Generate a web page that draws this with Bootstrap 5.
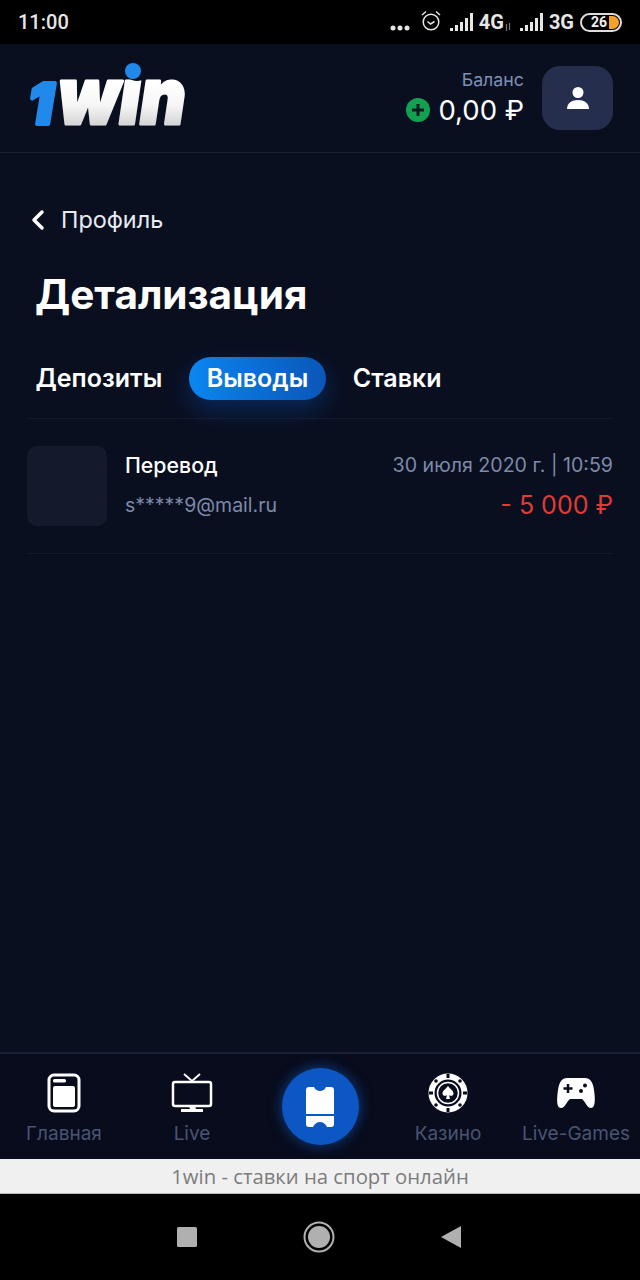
<!DOCTYPE html>
<html lang="ru">
<head>
  <meta charset="utf-8" />
  <title>1win - Детализация</title>
  <link href="https://cdn.jsdelivr.net/npm/bootstrap@5.3.2/dist/css/bootstrap.min.css" rel="stylesheet">
  <style>
    html, body { height: 1280px; overflow: hidden; }
    body { background: #0a0f20; color: #fff; font-family: Inter, "Noto Sans", sans-serif; }
    .screen { width: 640px; height: 1280px; }

    .status-bar { height: 44px; background: #000; padding: 0 18px; font-family: Roboto, sans-serif; color: #e6e6e6; }
    .status-time { font-size: 20px; font-weight: 500; }
    .status-icons { gap: 4px; }
    .status-net { font-size: 20px; font-weight: 700; line-height: 24px; }
    .dots-icon { margin: 11px 7px 0 0; }
    .alarm-icon { margin-right: 5px; margin-top: -4px; }
    .lte-icon { margin-right: 5px; margin-top: 9px; margin-left: -3px; }
    .battery { width: 42px; height: 19px; margin-left: 2px; border: 2px solid #ddd; border-radius: 10px; font-size: 14px; font-weight: 700; line-height: 15px; padding-left: 9px; color: #eee; }
    .battery-fill { width: 10px; height: 13px; top: 1px; right: 1px; border-radius: 0 7px 7px 0; background: #f2a32c; }

    .app-header { height: 109px; padding: 0 27px 0 25px; border-bottom: 1px solid #1a2035; }
    .logo { width: 166px; height: 100px; overflow: visible; }
    .logo-one { font: italic 900 56px/1 Inter, sans-serif; fill: #2189ea; stroke: #2189ea; stroke-width: 4; stroke-linejoin: round; }
    .logo-win { font: italic 900 78px/1 Inter, sans-serif; fill: url(#winGrad); stroke: url(#winGrad); stroke-width: 3; stroke-linejoin: round; }
    .balance-box { margin-right: 18px; }
    .balance-label { font-size: 17.800px; line-height: 22px; color: #7d8fb5; }
    .balance-value { font-size: 27.500px; line-height: 36px; padding-top: 1px; }
    .add-btn { width: 24px; height: 24px; border-radius: 50%; background: #12a150; }
    .user-btn { width: 71px; height: 64px; border-radius: 18px; background: #252e4d; border: 0; }

    .back-link { margin-top: 52px; padding-left: 31px; font-size: 23.400px; line-height: 30px; color: #e8ebf2; }
    .page-title { margin: 32px 0 0 35px; font-size: 40.500px; line-height: 56px; font-weight: 700; }

    .tabs-row { margin: 34px 27px 0; padding-bottom: 18px; border-bottom: 1px solid #131a2c; gap: 26.500px; }
    .tab-item { font-size: 25px; line-height: 43px; font-weight: 600; color: #fff; }
    .tab-first { margin-left: 8.500px; }
    .tab-on { padding: 0 18px; border-radius: 22px; background: linear-gradient(90deg, #0b86f0, #0a56b8); box-shadow: 0 10px 24px rgba(10, 90, 200, .35); }

    .history-row { margin: 0 27px; padding: 27px 0; border-bottom: 1px solid #131a2c; }
    .op-thumb { width: 80px; height: 80px; border-radius: 10px; background: #141a2c; margin-right: 18px; }
    .op-col { margin-top: -2px; }
    .op-name { font-size: 21.300px; line-height: 40px; font-weight: 500; }
    .op-sub { font-size: 19.500px; line-height: 40px; color: #7d8aa8; }
    .op-date { font-size: 19.600px; line-height: 40px; color: #7d8aa8; }
    .op-sum { font-size: 25px; line-height: 40px; color: #e23a35; }

    .bottom-nav { height: 107px; background: #080c1c; border-top: 2px solid #1a2035; }
    .nav-cell { width: 128px; height: 105px; padding-top: 19px; }
    .nav-label { font-size: 19px; line-height: 24px; margin-top: 9px; color: #4a5473; white-space: nowrap; }
    .nav-glyph { height: 40px; }
    .bet-cell { padding-top: 14px; }
    .bet-btn { width: 77px; height: 77px; border-radius: 50%; background: #0d57c4; box-shadow: 0 0 14px rgba(20, 110, 240, .55); }

    .browser-bar { height: 35px; background: #f0f0f0; color: #7c7c7c; font-family: "Open Sans", "Noto Sans", sans-serif; font-size: 20.300px; line-height: 35px; text-align: center; border-bottom: 1px solid #bbb; }
    .android-bar { height: 86px; background: #000; gap: 105px; padding-right: 2px; }
  </style>
</head>
<body>
  <div class="screen d-flex flex-column">

    <!-- status bar -->
    <div class="status-bar d-flex align-items-center">
      <span class="status-time">11:00</span>
      <div class="status-icons ms-auto d-flex align-items-center">
        <svg class="dots-icon" width="20" height="6" viewBox="0 0 20 6"><g fill="#e6e6e6"><circle cx="3" cy="3" r="2.500"/><circle cx="10" cy="3" r="2.500"/><circle cx="17" cy="3" r="2.500"/></g></svg>
        <svg class="alarm-icon" width="20" height="21" viewBox="0 0 20 21" fill="none" stroke="#e6e6e6" stroke-width="1.500"><circle cx="10" cy="12" r="7.800"/><path d="M6.500 11.500l3 2.500 4-2.500M1 5l4-3.500M19 5l-4-3.500"/></svg>
        <svg width="25" height="18" viewBox="0 0 25 18" fill="#e6e6e6"><rect x="0" y="15" width="3" height="3"/><rect x="5" y="12" width="3" height="6"/><rect x="10" y="9" width="3" height="9"/><rect x="15" y="5" width="3" height="13"/><rect x="20" y="0" width="3" height="18"/></svg>
        <span class="status-net">4G</span>
        <svg class="lte-icon" width="6" height="8" viewBox="0 0 6 8"><path d="M1.500 8V1M4.500 7V0" stroke="#777" stroke-width="1.200"/></svg>
        <svg width="25" height="18" viewBox="0 0 25 18" fill="#e6e6e6"><rect x="0" y="15" width="3" height="3"/><rect x="5" y="12" width="3" height="6"/><rect x="10" y="9" width="3" height="9"/><rect x="15" y="5" width="3" height="13"/><rect x="20" y="0" width="3" height="18"/></svg>
        <span class="status-net">3G</span>
        <div class="battery position-relative">26<span class="battery-fill position-absolute"></span></div>
      </div>
    </div>

    <!-- шапка -->
    <div class="app-header d-flex align-items-center justify-content-between">
      <svg class="logo" viewBox="0 0 166 100">
        <defs>
          <linearGradient id="winGrad" gradientUnits="userSpaceOnUse" x1="0" y1="-42" x2="0" y2="0">
            <stop offset="0" stop-color="#fff"/>
            <stop offset=".55" stop-color="#f6f6f6"/>
            <stop offset="1" stop-color="#d6d6d6"/>
          </linearGradient>
        </defs>
        <text class="logo-one" x="3" y="76">1</text>
        <text class="logo-win" transform="translate(33 76) scale(.9 1)">win</text>
        <circle cx="112" cy="20" r="13" fill="#0a0f20"/>
        <circle cx="108" cy="23" r="8" fill="#2189ea"/>
      </svg>
      <div class="d-flex align-items-center">
        <div class="balance-box text-end">
          <div class="balance-label">Баланс</div>
          <div class="d-flex align-items-center balance-value">
            <span class="add-btn d-flex align-items-center justify-content-center me-2">
              <svg width="14" height="14" viewBox="0 0 14 14"><path d="M7 1v12M1 7h12" stroke="#0b1a20" stroke-width="3"/></svg>
            </span>
            <span>0,00 ₽</span>
          </div>
        </div>
        <button class="user-btn d-flex align-items-center justify-content-center" type="button" aria-label="Профиль">
          <svg width="24" height="24" viewBox="0 0 24 24" fill="#fff"><circle cx="12" cy="6.500" r="5.500"/><path d="M1 23c0-6 5-9 11-9s11 3 11 9z"/></svg>
        </button>
      </div>
    </div>

    <!-- контент -->
    <div class="flex-grow-1">
      <div class="back-link d-flex align-items-center">
        <svg class="me-3" width="14" height="22" viewBox="0 0 14 22" fill="none" stroke="#fff" stroke-width="3.500" stroke-linecap="round" stroke-linejoin="round"><path d="M11 3l-8 8 8 8"/></svg>
        Профиль
      </div>
      <h1 class="page-title">Детализация</h1>

      <div class="tabs-row d-flex align-items-center">
        <span class="tab-item tab-first">Депозиты</span>
        <span class="tab-item tab-on">Выводы</span>
        <span class="tab-item">Ставки</span>
      </div>

      <div class="history-row d-flex align-items-center">
        <div class="op-thumb"></div>
        <div class="op-col flex-grow-1">
          <div class="op-name">Перевод</div>
          <div class="op-sub">s*****9@mail.ru</div>
        </div>
        <div class="op-col text-end">
          <div class="op-date">30 июля 2020 г. | 10:59</div>
          <div class="op-sum">- 5 000 ₽</div>
        </div>
      </div>
    </div>

    <!-- нижнее меню -->
    <div class="bottom-nav d-flex justify-content-between">
      <div class="nav-cell d-flex flex-column align-items-center">
        <svg class="nav-glyph" width="34" height="40" viewBox="0 0 34 40">
          <rect x="2" y="2" width="30" height="36" rx="5" fill="none" stroke="#fff" stroke-width="3"/>
          <rect x="6" y="6" width="13" height="3.500" rx="1.500" fill="#fff"/>
          <rect x="6" y="13" width="22" height="21" rx="2" fill="#fff"/>
        </svg>
        <div class="nav-label">Главная</div>
      </div>
      <div class="nav-cell d-flex flex-column align-items-center">
        <svg class="nav-glyph" width="42" height="40" viewBox="0 0 42 40">
          <path d="M13 1l8 7 8-7" fill="none" stroke="#fff" stroke-width="2"/>
          <rect x="2" y="9" width="38" height="24" rx="2" fill="none" stroke="#fff" stroke-width="2.500"/>
          <path d="M18 33h6l1 3h-6zM10 36h22v3H10z" fill="#fff"/>
        </svg>
        <div class="nav-label">Live</div>
      </div>
      <div class="nav-cell bet-cell d-flex flex-column align-items-center">
        <div class="bet-btn d-flex align-items-center justify-content-center">
          <svg width="28" height="40" viewBox="0 0 28 40" fill="#fff">
            <path d="M3 0h5c1 2.500 3.500 4 6 4s5-1.500 6-4h5a3 3 0 0 1 3 3v24H0V3a3 3 0 0 1 3-3z"/>
            <path d="M0 29h28v8a3 3 0 0 1-3 3h-4c-1-3-4-5-7-5s-6 2-7 5H3a3 3 0 0 1-3-3z"/>
            <path d="M0 28h6M10 28h8M22 28h6" stroke="#0d57c4" stroke-width="1.800"/>
          </svg>
        </div>
      </div>
      <div class="nav-cell d-flex flex-column align-items-center">
        <svg class="nav-glyph" width="40" height="40" viewBox="0 0 40 40">
          <circle cx="20" cy="20" r="16.500" fill="none" stroke="#fff" stroke-width="6"/>
          <circle cx="20" cy="20" r="10.500" fill="none" stroke="#fff" stroke-width="1.500"/>
          <path d="M20 13c2 3 5.500 4.500 5.500 7.500 0 2.500-3 3-4.500 1.500l1 4h-4l1-4c-1.500 1.500-4.500 1-4.500-1.500C14.500 17.500 18 16 20 13z" fill="#fff"/>
          <g fill="#080c1c"><rect x="18.500" y="1" width="3" height="4"/><rect x="18.500" y="35" width="3" height="4"/><rect x="1" y="18.500" width="4" height="3"/><rect x="35" y="18.500" width="4" height="3"/><circle cx="8" cy="8" r="1.800"/><circle cx="32" cy="8" r="1.800"/><circle cx="8" cy="32" r="1.800"/><circle cx="32" cy="32" r="1.800"/></g>
        </svg>
        <div class="nav-label">Казино</div>
      </div>
      <div class="nav-cell d-flex flex-column align-items-center">
        <svg class="nav-glyph" width="40" height="40" viewBox="0 0 40 40">
          <path d="M11 5h18c5 0 8 4 9 12 1 7 2 18-3 18-4 0-6-7-9-9H14c-3 2-5 9-9 9-5 0-4-11-3-18C3 9 6 5 11 5z" fill="#fff"/>
          <path d="M12 11v9M7.500 15.500h9" stroke="#080c1c" stroke-width="2.500"/>
          <circle cx="29" cy="12.500" r="2" fill="#080c1c"/><circle cx="25" cy="18" r="2" fill="#080c1c"/>
        </svg>
        <div class="nav-label">Live-Games</div>
      </div>
    </div>

    <!-- браузер -->
    <div class="browser-bar">1win - ставки на спорт онлайн</div>

    <!-- навигация android -->
    <div class="android-bar d-flex align-items-center justify-content-center">
      <svg width="22" height="22" viewBox="0 0 22 22"><rect x="1" y="1" width="20" height="20" rx="1.500" fill="#b0b0b0"/></svg>
      <svg width="32" height="32" viewBox="0 0 32 32"><circle cx="16" cy="16" r="14.500" fill="none" stroke="#b0b0b0" stroke-width="2"/><circle cx="16" cy="16" r="11" fill="#b0b0b0"/></svg>
      <svg width="22" height="24" viewBox="0 0 22 24"><path d="M21 1v22L1 12z" fill="#b0b0b0"/></svg>
    </div>
  </div>

  <script src="https://cdn.jsdelivr.net/npm/bootstrap@5.3.2/dist/js/bootstrap.bundle.min.js"></script>
</body>
</html>
